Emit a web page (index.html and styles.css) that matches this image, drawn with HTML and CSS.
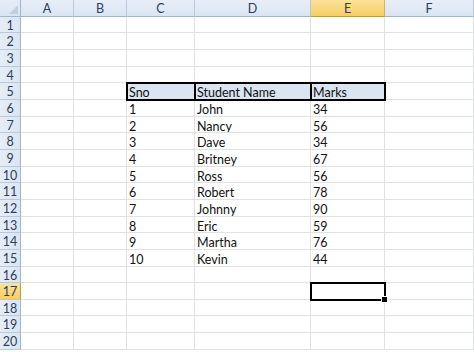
FILE: index.html
```html
<!DOCTYPE html>
<html>
<head>
<meta charset="utf-8">
<link rel="stylesheet" href="styles.css">
</head>
<body>
<div class="sheet">
  <div class="corner"><svg width="9" height="9" viewBox="0 0 9 9"><polygon points="9,0 9,9 0,9" fill="#c3cfdc"/></svg></div>
  <div class="ch">A</div><div class="ch">B</div><div class="ch">C</div><div class="ch">D</div><div class="ch sel">E</div><div class="ch">F</div>

  <div class="rh">1</div><div class="c"></div><div class="c"></div><div class="c"></div><div class="c"></div><div class="c"></div><div class="c"></div>
  <div class="rh">2</div><div class="c"></div><div class="c"></div><div class="c"></div><div class="c"></div><div class="c"></div><div class="c"></div>
  <div class="rh">3</div><div class="c"></div><div class="c"></div><div class="c"></div><div class="c"></div><div class="c"></div><div class="c"></div>
  <div class="rh">4</div><div class="c"></div><div class="c"></div><div class="c"></div><div class="c"></div><div class="c"></div><div class="c"></div>
  <div class="rh">5</div><div class="c"></div><div class="c"></div><div class="c th">Sno</div><div class="c th">Student Name</div><div class="c th">Marks</div><div class="c"></div>
  <div class="rh">6</div><div class="c"></div><div class="c"></div><div class="c">1</div><div class="c">John</div><div class="c">34</div><div class="c"></div>
  <div class="rh">7</div><div class="c"></div><div class="c"></div><div class="c">2</div><div class="c">Nancy</div><div class="c">56</div><div class="c"></div>
  <div class="rh">8</div><div class="c"></div><div class="c"></div><div class="c">3</div><div class="c">Dave</div><div class="c">34</div><div class="c"></div>
  <div class="rh">9</div><div class="c"></div><div class="c"></div><div class="c">4</div><div class="c">Britney</div><div class="c">67</div><div class="c"></div>
  <div class="rh">10</div><div class="c"></div><div class="c"></div><div class="c">5</div><div class="c">Ross</div><div class="c">56</div><div class="c"></div>
  <div class="rh">11</div><div class="c"></div><div class="c"></div><div class="c">6</div><div class="c">Robert</div><div class="c">78</div><div class="c"></div>
  <div class="rh">12</div><div class="c"></div><div class="c"></div><div class="c">7</div><div class="c">Johnny</div><div class="c">90</div><div class="c"></div>
  <div class="rh">13</div><div class="c"></div><div class="c"></div><div class="c">8</div><div class="c">Eric</div><div class="c">59</div><div class="c"></div>
  <div class="rh">14</div><div class="c"></div><div class="c"></div><div class="c">9</div><div class="c">Martha</div><div class="c">76</div><div class="c"></div>
  <div class="rh">15</div><div class="c"></div><div class="c"></div><div class="c">10</div><div class="c">Kevin</div><div class="c">44</div><div class="c"></div>
  <div class="rh">16</div><div class="c"></div><div class="c"></div><div class="c"></div><div class="c"></div><div class="c"></div><div class="c"></div>
  <div class="rh sel">17</div><div class="c"></div><div class="c"></div><div class="c"></div><div class="c"></div><div class="c active"><span class="handle"></span></div><div class="c"></div>
  <div class="rh">18</div><div class="c"></div><div class="c"></div><div class="c"></div><div class="c"></div><div class="c"></div><div class="c"></div>
  <div class="rh">19</div><div class="c"></div><div class="c"></div><div class="c"></div><div class="c"></div><div class="c"></div><div class="c"></div>
  <div class="rh">20</div><div class="c"></div><div class="c"></div><div class="c"></div><div class="c"></div><div class="c"></div><div class="c"></div>
</div>
</body>
</html>
```
FILE: styles.css
```css
html, body {
  margin: 0;
  padding: 0;
  background: #ffffff;
}
.sheet {
  display: grid;
  grid-template-columns: 21px 53px 53px 68px 116px 74px 89px;
  grid-template-rows: repeat(21, 16.667px);
  width: 474px;
  height: 352px;
  font-family: Lato, "Liberation Sans", sans-serif;
  font-size: 12.5px;
  color: #111;
  background: #fff;
}
.corner {
  background: linear-gradient(#e6edf7, #dae4f1);
  border-right: 1px solid #9eb6ce;
  border-bottom: 1px solid #9eb6ce;
  display: flex;
  align-items: flex-end;
  justify-content: flex-end;
  padding: 0 2px 2px 0;
  box-sizing: border-box;
}
.corner svg { display: block; }
.ch {
  background: linear-gradient(#e7eef8, #dbe5f2);
  border-right: 1px solid #b8c9dc;
  border-bottom: 1px solid #9eb6ce;
  box-sizing: border-box;
  text-align: center;
  line-height: 17px;
  color: #2c3e58;
  font-size: 12.5px;
}
.ch.sel {
  background: linear-gradient(#fbe29b, #f6cd62);
  border-bottom-color: #c29b43;
  border-right-color: #d8b25a;
}
.rh {
  background: linear-gradient(90deg, #e5edf7, #dbe5f2);
  border-right: 1px solid #9eb6ce;
  border-bottom: 1px solid #b8c9dc;
  box-sizing: border-box;
  text-align: center;
  line-height: 17px;
  color: #2c3e58;
  font-size: 12.5px;
}
.rh.sel {
  background: linear-gradient(#fbe29b, #f6cd62);
  border-right-color: #c29b43;
}
.c {
  border-right: 1px solid #dfe1e2;
  border-bottom: 1px solid #dfe1e2;
  box-sizing: border-box;
  line-height: 19px;
  padding-left: 2px;
  white-space: nowrap;
  overflow: hidden;
}
.c.th {
  background: #dbe5f1;
  outline: 2px solid #000;
  outline-offset: -1px;
  position: relative;
  z-index: 1;
}
.c.active {
  outline: 2px solid #000;
  outline-offset: -1px;
  position: relative;
  overflow: visible;
  z-index: 2;
}
.handle {
  position: absolute;
  right: -4px;
  bottom: -4px;
  width: 5px;
  height: 5px;
  background: #000;
  border: 1px solid #fff;
}
```
